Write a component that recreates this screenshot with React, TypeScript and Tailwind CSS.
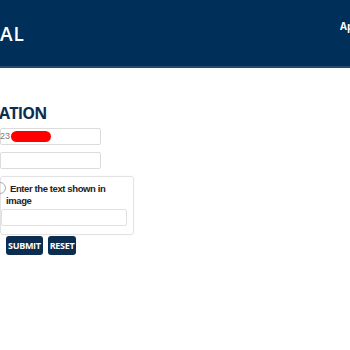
import React from 'react';

const App = () => {
  return (
    <div className="w-[350px] h-[350px] overflow-hidden bg-white font-['Open_Sans',sans-serif]">
      {/* Header */}
      <header className="h-[68px] bg-[#00305a] border-b-2 border-[#244d74] flex items-start justify-between">
        <div className="mt-[25px] text-white text-[19px] font-semibold tracking-[1px] leading-none">AL</div>
        <div className="mt-[21px] text-white text-[10px] font-bold leading-none w-[10px] overflow-visible whitespace-nowrap">Ap</div>
      </header>

      {/* Form */}
      <main className="pt-[37px] flex flex-col">
        <h2 className="text-[#0d2d50] text-[16px] font-bold leading-none tracking-[-0.8px] -ml-[1px]">ATION</h2>

        <div className="mt-[7px] w-[101px] h-[17px] border border-[#dcdcdc] rounded-[2px] flex items-center font-['Liberation_Sans',sans-serif] text-[9px] text-[#777]">
          <span className="-ml-[1px]">23</span>
          <span className="ml-[1px] w-[40px] h-[11px] bg-[#ff0000] rounded-full" />
        </div>

        <div className="mt-[7px] w-[101px] h-[17px] border border-[#dcdcdc] rounded-[2px]" />

        <div className="mt-[7px] w-[134px] h-[59px] border border-[#e3e3e3] rounded-[3px] shadow-[0_0_2px_rgba(0,0,0,0.06)] flex flex-col pt-[5px]">
          <div className="flex items-start">
            <span className="-ml-[7px] w-[12px] h-[12px] rounded-full border border-[#aaa] shrink-0" />
            <p className="ml-[4px] font-['Liberation_Sans',sans-serif] font-bold text-[9.5px] leading-[12px] tracking-[-0.4px] text-[#222] w-[110px] pt-[1px]">
              Enter the text shown in
              <br />
              <span className="-ml-[4px]">image</span>
            </p>
          </div>
          <div className="mt-[2px] w-[126px] h-[17px] border border-[#e0e0e0] rounded-[2px]" />
        </div>

        <div className="mt-[1px] flex gap-[5px] pl-[6px]">
          <button className="h-[19px] px-[2px] bg-[#0d2d50] text-white text-[9px] font-bold rounded-[3px] leading-none tracking-[-0.3px]">SUBMIT</button>
          <button className="h-[19px] px-[2px] bg-[#0d2d50] text-white text-[9px] font-bold rounded-[3px] leading-none tracking-[-0.3px]">RESET</button>
        </div>
      </main>
    </div>
  );
};

export default App;
